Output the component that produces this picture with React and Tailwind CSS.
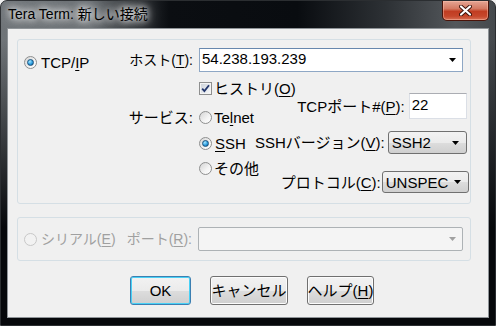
const F = "font-['Liberation_Sans','Noto_Sans_CJK_JP',sans-serif]"

const U = ({ children }) => (
    <span className="underline decoration-1 underline-offset-[2px]">{children}</span>
)

const Radio = ({ checked, disabled }) => (
    <span
        className={`flex h-[13px] w-[13px] shrink-0 items-center justify-center rounded-full border ${
            disabled
                ? "border-[#c8c8c8] bg-[#f2f2f2]"
                : "border-[#8e8f8f] bg-[linear-gradient(135deg,#d4d4d4,#f4f4f4_60%,#ffffff)]"
        }`}
    >
        {checked && (
            <span className="h-[7px] w-[7px] rounded-full border border-[#1a527d] bg-[radial-gradient(circle_at_35%_30%,#a6e6ff,#2d9ee0_55%,#0d4f86)]" />
        )}
    </span>
)

const Check = () => (
    <span className="flex h-[13px] w-[13px] shrink-0 items-center justify-center border border-[#8e8f8f] bg-[#f4f4f4]">
        <span className="flex h-[9px] w-[9px] items-center justify-center bg-[linear-gradient(135deg,#cfd4db,#f4f6f8)]">
            <svg width="9" height="9" viewBox="0 0 9 9">
                <path d="M1.2 4.6 L3.4 7 L8 1.2" fill="none" stroke="#23366c" strokeWidth="1.8" />
            </svg>
        </span>
    </span>
)

const Arrow = ({ color = "#000" }) => (
    <svg width="7" height="4" viewBox="0 0 7 4">
        <path d="M0 0 H7 L3.5 4 Z" fill={color} />
    </svg>
)

const Select = ({ value, className }) => (
    <div
        className={`flex items-center justify-between rounded-[3px] border border-[#707070] bg-[linear-gradient(to_bottom,#f2f2f2_0%,#ebebeb_50%,#dddddd_51%,#cfcfcf_100%)] pl-[3px] pr-[7px] ${className}`}
    >
        <span>{value}</span>
        <Arrow />
    </div>
)

const Button = ({ children, className, focused }) => (
    <button
        className={`flex h-[29px] items-center justify-center rounded-[3px] border bg-[linear-gradient(to_bottom,#f2f2f2_0%,#ebebeb_50%,#dddddd_51%,#cfcfcf_100%)] ${
            focused
                ? "border-[#3c7fb1] shadow-[inset_0_0_0_1px_#48d1f6]"
                : "border-[#707070] shadow-[inset_0_0_0_1px_#fcfcfc]"
        } ${className}`}
    >
        {children}
    </button>
)

export default function App() {
    return (
        <div className={`h-[326px] w-[496px] overflow-hidden bg-[#f0f0f0] ${F} text-[15px] leading-none text-black`}>
            <div className="flex h-full w-full flex-col rounded-t-[7px] border border-[#2b2e31] bg-[linear-gradient(to_bottom,transparent_0%,transparent_12%,#06080b_70%),linear-gradient(to_right,#6f7478_0%,#6a6f73_18%,#33373b_26%,#0b0e12_34%,#090c10_60%,#2d3135_78%,#53575b_92%,#45494d_100%)]">
                {/* title bar */}
                <div className="flex h-[27px] shrink-0 items-start">
                    <div className="ml-[7px] mt-[4px] text-[14px] leading-[18px] [text-shadow:0_0_6px_#ffffff,0_0_10px_#ffffff,0_0_16px_#d8d8d8]">
                        Tera Term: 新しい接続
                    </div>
                    <div className="ml-auto mr-[6px] flex h-[20px] w-[47px] items-center justify-center rounded-b-[5px] border border-t-0 border-[#4a1309] bg-[linear-gradient(to_bottom,#e5a594_0%,#d47a63_40%,#c13d22_55%,#c6472b_80%,#d87156_100%)] shadow-[inset_0_0_0_1px_rgba(255,200,180,0.45)]">
                        <svg width="13" height="11" viewBox="0 0 13 11">
                            <path d="M2 1.5 L11 9.5 M11 1.5 L2 9.5" stroke="#3a1008" strokeWidth="4" strokeLinecap="round" />
                            <path d="M2 1.5 L11 9.5 M11 1.5 L2 9.5" stroke="#ffffff" strokeWidth="2.2" strokeLinecap="round" />
                        </svg>
                    </div>
                </div>

                {/* client area */}
                <div className="mx-[6px] flex h-[290px] flex-col border border-[#8f9498] bg-[#f0f0f0] pl-[9px] pt-[10px]">
                    {/* TCP/IP group */}
                    <div className="flex h-[165px] w-[454px] flex-col rounded-[3px] border border-[#d5dfe5]">
                        <div className="mt-[8px] flex h-[24px] items-center pl-[6px]">
                            <div className="mt-[4px] flex w-[106px] items-center gap-[4px]">
                                <Radio checked />
                                <span>
                                    TCP/<U>I</U>P
                                </span>
                            </div>
                            <div className="flex w-[63px] justify-end text-[14px]">
                                <span className="shrink-0 whitespace-nowrap">
                                    ホスト(<U>T</U>):
                                </span>
                            </div>
                            <div className="relative ml-[6px] flex h-[24px] w-[264px] items-center border border-[#8ea7c5] border-t-[#6787ad] bg-white pl-[2px]">
                                <span className="-mt-[4px]">54.238.193.239</span>
                                <span className="ml-auto mr-[6px] flex">
                                    <Arrow />
                                </span>
                            </div>
                        </div>

                        <div className="flex pl-[112px]">
                            <div className="mt-[37px] flex h-[16px] w-[63px] items-center justify-end">
                                <span className="shrink-0 whitespace-nowrap">サービス:</span>
                            </div>
                            <div className="ml-[6px] flex w-[56px] flex-col">
                                <div className="mt-[8px] flex h-[16px] items-center gap-[2px] whitespace-nowrap">
                                    <Check />
                                    <span>
                                        ヒストリ(<U>O</U>)
                                    </span>
                                </div>
                                <div className="mt-[13px] flex h-[16px] items-center gap-[2px] whitespace-nowrap">
                                    <Radio />
                                    <span>
                                        Te<U>l</U>net
                                    </span>
                                </div>
                                <div className="mt-[10px] flex h-[16px] items-center gap-[3px] whitespace-nowrap">
                                    <Radio checked />
                                    <span>
                                        <U>S</U>SH
                                    </span>
                                </div>
                                <div className="mt-[9px] flex h-[16px] items-center gap-[2px] whitespace-nowrap">
                                    <Radio />
                                    <span>その他</span>
                                </div>
                            </div>
                            <div className="flex flex-1 flex-col items-end pr-[5px]">
                                <div className="mt-[21px] flex h-[26px] items-center whitespace-nowrap">
                                    <span>
                                        TCPポート#(<U>P</U>):
                                    </span>
                                    <div className="ml-[4px] mr-[2px] flex h-[26px] w-[58px] items-start border border-[#dbdfe6] border-t-[#abadb3] bg-white pl-[2px] pt-[3px]">
                                        22
                                    </div>
                                </div>
                                <div className="mt-[12px] flex h-[23px] items-center whitespace-nowrap">
                                    <span>
                                        SSHバージョン(<U>V</U>):
                                    </span>
                                    <Select value="SSH2" className="ml-[3px] mr-[2px] h-[23px] w-[79px]" />
                                </div>
                                <div className="mt-[17px] flex h-[22px] items-center whitespace-nowrap">
                                    <span>
                                        プロトコル(<U>C</U>):
                                    </span>
                                    <Select value="UNSPEC" className="ml-[1px] h-[22px] w-[87px]" />
                                </div>
                            </div>
                        </div>
                    </div>

                    {/* serial group */}
                    <div className="mt-[13px] flex h-[44px] w-[454px] items-center rounded-[3px] border border-[#d5dfe5] pl-[6px] text-[14px] text-[#a0a0a0]">
                        <div className="flex w-[104px] items-center gap-[4px] whitespace-nowrap">
                            <Radio disabled />
                            <span>
                                シリアル(<U>E</U>)
                            </span>
                        </div>
                        <div className="flex w-[64px] justify-end">
                            <span className="shrink-0 whitespace-nowrap">
                                ポート(<U>R</U>):
                            </span>
                        </div>
                        <div className="ml-[6px] flex h-[24px] w-[265px] items-center justify-end rounded-[2px] border border-[#adb2b5] bg-[#f4f4f4] pr-[6px]">
                            <Arrow color="#a0a0a0" />
                        </div>
                    </div>

                    {/* buttons */}
                    <div className="mt-[15px] flex gap-[19px] pl-[113px]">
                        <Button focused className="w-[61px]">
                            OK
                        </Button>
                        <Button className="w-[78px]">キャンセル</Button>
                        <Button className="w-[67px] whitespace-nowrap">
                            ヘルプ(<U>H</U>)
                        </Button>
                    </div>
                </div>
            </div>
        </div>
    )
}
